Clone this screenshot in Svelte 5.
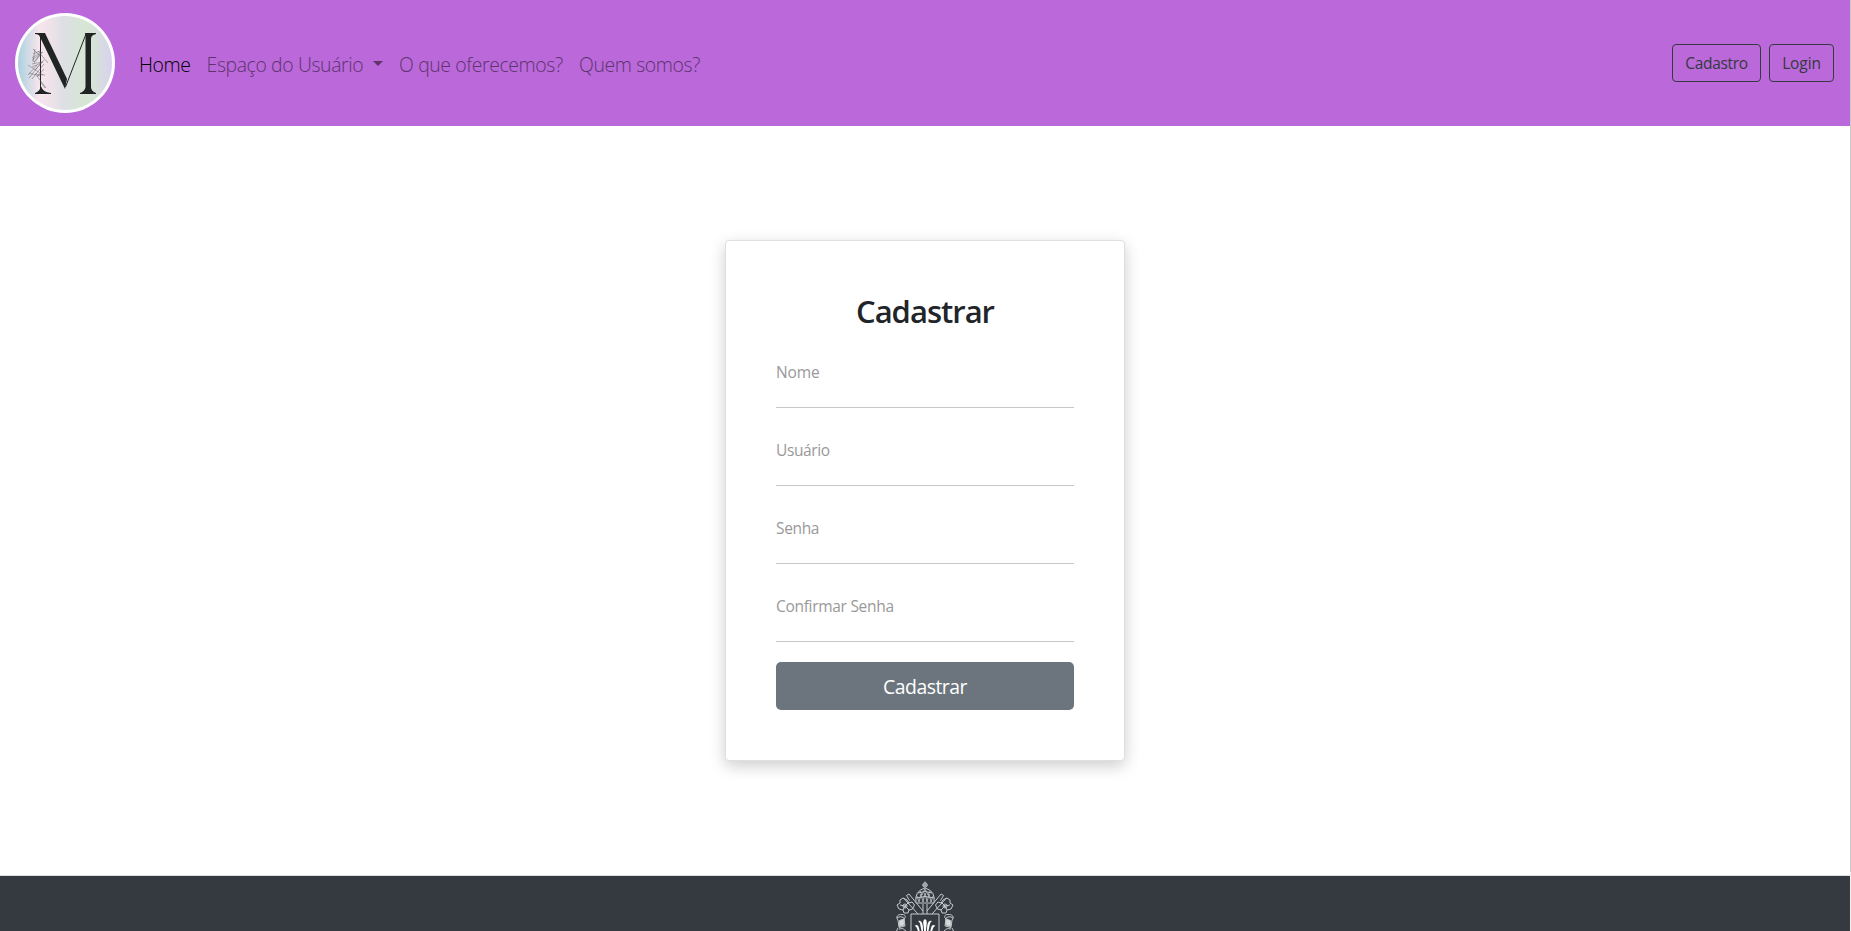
<script>
  const fields = [
    { id: 'nome', label: 'Nome', type: 'text', spacing: '-0.1px' },
    { id: 'usuario', label: 'Usuário', type: 'text', spacing: '-0.4px' },
    { id: 'senha', label: 'Senha', type: 'password', spacing: '-0.35px' },
    { id: 'confirmar', label: 'Confirmar Senha', type: 'password', spacing: '-0.3px' }
  ];
</script>

<div class="page">
  <nav class="navbar">
    <a class="brand" href="#home" aria-label="M">
      <svg width="100" height="100" viewBox="0 0 100 100">
        <defs>
          <linearGradient id="pastel">
            <stop offset="0" stop-color="#abd0df" />
            <stop offset=".22" stop-color="#f6e5ec" />
            <stop offset=".34" stop-color="#f0e2e9" />
            <stop offset=".48" stop-color="#dddfe4" />
            <stop offset=".7" stop-color="#d7e6d5" />
            <stop offset=".8" stop-color="#d7e3d8" />
            <stop offset="1" stop-color="#d8d1ee" />
          </linearGradient>
        </defs>
        <circle cx="50" cy="50" r="50" fill="#fff" />
        <circle cx="50" cy="50" r="47" fill="url(#pastel)" />
        <g fill="#202524">
          <path d="M20 20h10L52 66 50 76 25 24q-1-3-5-3Z" />
          <path d="M70 20h11v1q-5 1-5 5v48q0 4 5 6v1H65v-1q5-2 5.500-6V23Z" />
          <path d="M20 80q5-2 5.500-6h1q1 5 9.500 6v1H20Z" />
        </g>
        <path d="M25.500 23v53M50.500 74 71 21" fill="none" stroke="#202524" stroke-width="1" />
        <path d="M18 36l6 6M20 36l-2 13M18 41l7-3M17 45l9-6M17 47l11-8M19 50l7-9M23 38l10 12M27 39l-8 10M17 51l10-2M17 54l11-5M13 52l15 10M20 57l9-10M14 65l12-15M13 62l9-10M17 66l12-15M22 64l7-8M14 60l11 3M20 61l10 1M22 63l9 12M25 68l5 7" fill="none" stroke="#4b5053" stroke-width=".55" opacity=".8" />
      </svg>
    </a>
    <ul class="links">
      <li class="active"><a class="l-home" href="#home">Home</a></li>
      <li><a class="l-user" href="#usuario">Espaço do Usuário</a><span class="caret"></span></li>
      <li><a class="l-offer" href="#oferecemos">O que oferecemos?</a></li>
      <li><a class="l-who" href="#quem">Quem somos?</a></li>
    </ul>
    <div class="actions">
      <button class="signup">Cadastro</button>
      <button class="login">Login</button>
    </div>
  </nav>

  <main>
    <form class="card" onsubmit={(e) => e.preventDefault()}>
      <h2>Cadastrar</h2>
      {#each fields as f}
        <div class="field">
          <label for={f.id} style:letter-spacing={f.spacing}>{f.label}</label>
          <input id={f.id} type={f.type} />
        </div>
      {/each}
      <button class="submit">Cadastrar</button>
    </form>
  </main>

  <footer>
    <svg width="60" height="100" viewBox="0 0 60 100">
      <defs>
        <g id="key">
          <path d="M11.500 19.500l2.500-1.500 14 17M8.500 22 23 38M11.500 19.500l3 5" />
          <path d="M8 22l4 2 2 3 3-1 2.500 3-2 4-3.500 1-1 3-4 0-1-3-4-1-2-4 3-2 0-3z" />
          <path d="M5 29l5 1 4-4M10 30l4 4M10 30l-2 4" />
          <circle cx="10" cy="30" r="2" />
        </g>
        <g id="tassel">
          <path d="M3 44c-3-3 0-6 4-5.500 4 0 4 3 2 4.500l1 7-6 1.500zM3 52q-3 3 0 6M4 53q4-2 7 2M2 42q4-3 8 1" />
          <path d="M4.500 44.500l4.500-1.500v6l-4.500 1.500z" fill="#d6d8d9" />
        </g>
      </defs>
      <g fill="none" stroke="#c6c9cc" stroke-width="1">
        <use href="#key" />
        <use href="#key" transform="matrix(-1 0 0 1 60 0)" />
        <use href="#tassel" />
        <use href="#tassel" transform="matrix(-1 0 0 1 60 0)" />
        <path d="M21 27q-2-12 9-15 11 3 9 15z" fill="#343a40" />
        <circle cx="30" cy="9" r="2.200" />
        <path d="M30 5.500v6M27.500 9h5" />
        <path d="M23 17q7-3 14 0M21 22q9-3 18 0" />
        <path d="M22 20l2 6 2-8 2 8 2-9 2 9 2-8 2 8 2-6M25 15l2 4 3-6 3 6 2-4" stroke-width=".8" />
        <path d="M28 28v10M32 28v10" />
        <path d="M16 80V38h28v42" />
      </g>
      <g fill="#fff">
        <path d="M30 43q2.500 1 1.500 6L30 64l-1.500-15Q27.500 44 30 43Z" />
        <path d="M28.500 64 27.800 50q-.8-6-4.800-5 2 1 2.500 5zM31.500 64 32.200 50q.8-6 4.800-5-2 1-2.500 5z" />
        <path d="M26.500 63 24 52q-1-5-4.500-2 2 0 3 4zM33.500 63 36 52q1-5 4.500-2-2 0-3 4z" />
      </g>
    </svg>
  </footer>
</div>

<style>
  :global(body) { margin: 0; background: #fff; overflow: hidden; }
  .page {
    box-sizing: border-box;
    height: 931px;
    display: flex;
    flex-direction: column;
    overflow: hidden;
    padding-right: 1px;
    background: linear-gradient(#c9c9c9 872px, #f1f1f1 872px) right / 1px 100% no-repeat;
    font-family: "Open Sans", "Noto Sans", sans-serif;
    color: #212529;
  }
  .navbar {
    box-sizing: border-box;
    flex: none;
    height: 126px;
    display: flex;
    align-items: center;
    padding: 0 16px 0 15px;
    background: #ba68da;
  }
  .brand, .brand svg { display: block; }
  .links {
    display: flex;
    list-style: none;
    margin: 3px auto 0 24px;
    padding: 0;
    font-size: 19.4px;
    line-height: 30px;
    font-weight: 300;
  }
  .links li { display: flex; align-items: center; white-space: nowrap; margin-right: 16.3px; color: #5d346d; }
  .links .active { color: #000; margin-right: 16px; }
  .links a { color: inherit; text-decoration: none; letter-spacing: -0.38px; }
  .caret { margin: 0 0 3px 9.500px; border: 5.500px solid transparent; border-top-color: currentColor; border-bottom: 0; }
  button { font-family: inherit; padding: 0; }
  .actions { display: flex; gap: 8px; }
  .actions button {
    height: 38px;
    border: 1px solid #343a40;
    border-radius: 4px;
    background: transparent;
    color: #343a40;
    font-size: 15.500px;
    line-height: 24px;
    letter-spacing: -0.3px;
  }
  .actions .signup { width: 89px; }
  .actions .login { width: 65px; letter-spacing: -0.1px; }
  main { height: 749px; flex: none; display: flex; justify-content: center; align-items: center; }
  .card {
    box-sizing: border-box;
    width: 400px;
    height: 521px;
    padding: 50px;
    border: 1px solid #dfdfdf;
    border-radius: 4px;
    background: #fff;
    box-shadow: 0 5px 16px rgba(0, 0, 0, .2);
  }
  h2 { margin: 0 0 24px; height: 40px; font-size: 31px; line-height: 40px; font-weight: 600; letter-spacing: -1px; text-align: center; }
  .field { height: 78px; display: flex; flex-direction: column; }
  label { height: 24px; margin: 5px 0 1px; font-size: 15.500px; line-height: 24px; color: #999; white-space: nowrap; }
  input { box-sizing: border-box; width: 100%; height: 23px; padding: 0; border: 0; border-bottom: 1px solid #c8c8c8; background: transparent; outline: 0; }
  .submit { display: block; width: 100%; height: 48px; margin-top: -5px; padding-top: 2px; border: 0; border-radius: 5px; background: #6c757d; color: #fff; font-size: 19.400px; line-height: 30px; letter-spacing: -0.5px; }
  footer { flex: 1; min-height: 0; box-sizing: border-box; display: flex; justify-content: center; border-top: 1px solid #dde0e3; background: #343a40; overflow: hidden; }
  footer svg { flex: none; }
</style>
